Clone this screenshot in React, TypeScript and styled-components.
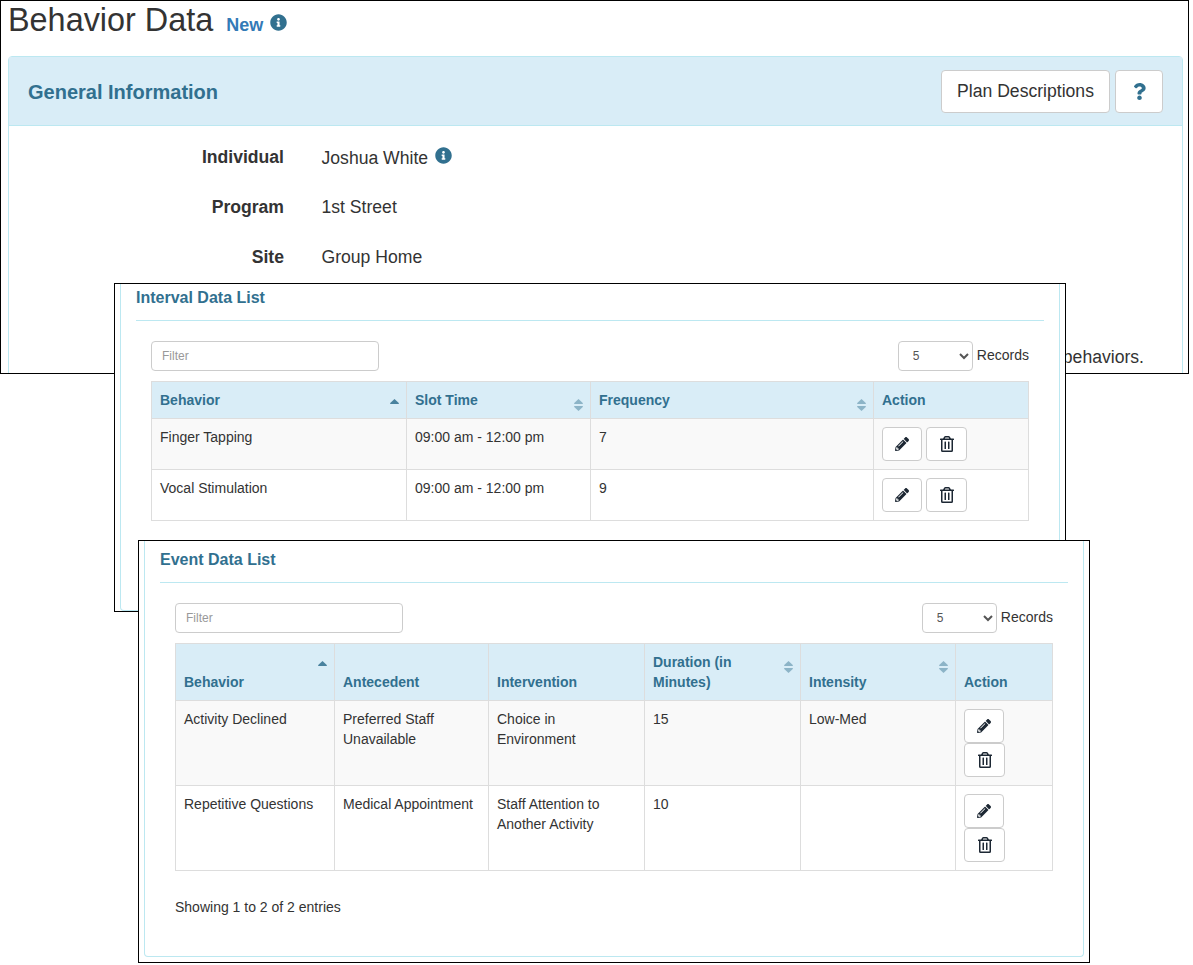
import React from "react";
import styled, { createGlobalStyle } from "styled-components";
import { FaInfoCircle, FaPencilAlt, FaQuestion, FaRegTrashAlt } from "react-icons/fa";

const Global = createGlobalStyle`
  html, body { margin: 0; padding: 0; background: #fff; overflow: hidden; }
  body { font-family: "Liberation Sans", Arial, sans-serif; color: #333; font-size: 14px; line-height: 20px; }
  * { box-sizing: border-box; }
`;

const Desktop = styled.div`
  position: relative;
  width: 1193px;
  height: 965px;
`;

const Window = styled.section<{ $x: number; $y: number; $w: number; $h: number }>`
  position: absolute;
  left: ${(p) => p.$x}px;
  top: ${(p) => p.$y}px;
  width: ${(p) => p.$w}px;
  height: ${(p) => p.$h}px;
  background: #fff;
  border: 1px solid #000;
  overflow: hidden;
`;

const PageHead = styled.header`
  display: flex;
  align-items: baseline;
  height: 55px;
  padding: 0 0 0 7px;
`;

const PageTitle = styled.h1`
  margin: 0;
  font-size: 32.4px;
  font-weight: 400;
  line-height: 38px;
  color: #333;
`;

const NewTag = styled.span`
  margin-left: 13px;
  font-size: 18px;
  font-weight: 700;
  color: #337ab7;
`;

const InfoIcon = styled(FaInfoCircle)`
  color: #31708f;
  font-size: 17px;
  margin-left: 7px;
`;

const TopPanel = styled.div`
  margin: 0 5px 0 7px;
  border: 1px solid #bce8f1;
  border-radius: 4px;
`;

const TopPanelHead = styled.div`
  display: flex;
  align-items: center;
  justify-content: space-between;
  height: 69px;
  padding: 1px 19px 0;
  background: #d9edf7;
  border-bottom: 1px solid #bce8f1;
`;

const TopPanelTitle = styled.h2`
  margin: 0;
  font-size: 20px;
  font-weight: 700;
  color: #31708f;
`;

const HeadActions = styled.div`
  display: flex;
  gap: 5px;
`;

const HeadButton = styled.button<{ $w: number }>`
  width: ${(p) => p.$w}px;
  height: 43px;
  padding: 0;
  display: flex;
  align-items: center;
  justify-content: center;
  background: #fff;
  border: 1px solid #ccc;
  border-radius: 4px;
  font-family: inherit;
  font-size: 17.6px;
  color: #333;
`;

const HelpIcon = styled(FaQuestion)`
  color: #31708f;
  font-size: 17px;
`;

const InfoBody = styled.div`
  padding: 6px 0 60px;
`;

const InfoRow = styled.div`
  display: grid;
  grid-template-columns: 275px 1fr;
  column-gap: 37.5px;
  height: 50px;
  align-items: center;
  font-size: 17.6px;
`;

const InfoLabel = styled.div`
  text-align: right;
  font-weight: 700;
`;

const InfoValue = styled.div`
  display: flex;
  align-items: baseline;
`;

const Note = styled.p`
  margin: 65px 38px 0 0;
  text-align: right;
  font-size: 17.6px;
  line-height: 20px;
`;

const ListPanel = styled.div`
  margin: 0 5px;
  height: 100%;
  padding: 0 15px;
  border: 1px solid #bce8f1;
  border-top: 0;
  border-radius: 0 0 4px 4px;
`;

const ShortPanel = styled(ListPanel)`
  height: 416px;
`;

const ListTitle = styled.h3<{ $pad: number }>`
  margin: 0 0 20px;
  padding: ${(p) => p.$pad}px 0 9px;
  font-size: 16px;
  font-weight: 700;
  line-height: 26px;
  color: #31708f;
  border-bottom: 1px solid #bce8f1;
`;

const ListBody = styled.div`
  padding: 0 15px;
`;

const Toolbar = styled.div`
  display: flex;
  align-items: center;
  justify-content: space-between;
  height: 30px;
  margin-bottom: 10px;
`;

const FilterInput = styled.input`
  width: 228px;
  height: 30px;
  padding: 0 10px;
  border: 1px solid #ccc;
  border-radius: 4px;
  font-family: inherit;
  font-size: 12px;
  color: #555;
  &::placeholder { color: #999; opacity: 1; }
`;

const Records = styled.label`
  display: flex;
  align-items: center;
  gap: 4px;
  font-size: 14px;
  line-height: 20px;
  padding-bottom: 2px;
`;

const PageSize = styled.select`
  width: 75px;
  height: 30px;
  padding: 0 10px;
  margin-top: 2px;
  background: #fff;
  border: 1px solid #ccc;
  border-radius: 4px;
  font-family: inherit;
  font-size: 12px;
  color: #555;
`;

const Table = styled.table`
  width: 877px;
  table-layout: fixed;
  border-collapse: collapse;
  font-size: 14px;
`;

const HeadCell = styled.th<{ $w: number }>`
  position: relative;
  width: ${(p) => p.$w}px;
  padding: 8px;
  text-align: left;
  vertical-align: bottom;
  font-weight: 700;
  line-height: 20px;
  color: #31708f;
  background: #d9edf7;
  border: 1px solid #ddd;
`;

const SortMark = styled.svg<{ $on: boolean }>`
  position: absolute;
  top: 17px;
  right: 7px;
  width: 9px;
  height: 12px;
  fill: #31708f;
  opacity: ${(p) => (p.$on ? 0.85 : 0.45)};
`;

const Row = styled.tr<{ $h: number; $odd: boolean }>`
  height: ${(p) => p.$h}px;
  background: ${(p) => (p.$odd ? "#f9f9f9" : "#fff")};
`;

const Cell = styled.td`
  padding: 8px;
  vertical-align: top;
  line-height: 20px;
  border: 1px solid #ddd;
`;

const ActionGroup = styled.div<{ $stacked: boolean }>`
  display: flex;
  flex-direction: ${(p) => (p.$stacked ? "column" : "row")};
  align-items: flex-start;
  gap: ${(p) => (p.$stacked ? 0 : 4)}px;
`;

const IconButton = styled.button<{ $w: number }>`
  width: ${(p) => p.$w}px;
  height: 34px;
  padding: 0;
  display: flex;
  align-items: center;
  justify-content: center;
  background: #fff;
  border: 1px solid #ccc;
  border-radius: 4px;
  color: #1c2733;
  font-size: 14px;
`;

const Footer = styled.div`
  margin-top: 26px;
  font-size: 14px;
  line-height: 20px;
`;

type Col = { label: React.ReactNode; w: number; sort?: "up" | "both" };

const SortIcon = ({ kind }: { kind: "up" | "both" }) => (
  <SortMark $on={kind === "up"} viewBox="0 0 9 12" aria-hidden>
    <path d="M4.5 0 L9 4.2 Q9 5 8.2 5 L0.8 5 Q0 5 0 4.2 Z" />
    {kind === "both" && <path d="M4.5 12 L9 7.8 Q9 7 8.2 7 L0.8 7 Q0 7 0 7.8 Z" />}
  </SortMark>
);

const Actions = ({ stacked }: { stacked: boolean }) => (
  <ActionGroup $stacked={stacked}>
    <IconButton $w={40} aria-label="Edit"><FaPencilAlt /></IconButton>
    <IconButton $w={41} aria-label="Delete"><FaRegTrashAlt size={16} /></IconButton>
  </ActionGroup>
);

const ListControls = () => (
  <Toolbar>
    <FilterInput placeholder="Filter" />
    <Records>
      <PageSize defaultValue="5">
        <option value="5">5</option>
        <option value="10">10</option>
      </PageSize>
      Records
    </Records>
  </Toolbar>
);

const DataTable = ({ cols, rows, rowH, stacked }: { cols: Col[]; rows: string[][]; rowH: number; stacked: boolean }) => (
  <Table>
    <thead>
      <tr>
        {cols.map((c, i) => (
          <HeadCell key={i} $w={c.w}>
            {c.label}
            {c.sort && <SortIcon kind={c.sort} />}
          </HeadCell>
        ))}
      </tr>
    </thead>
    <tbody>
      {rows.map((r, i) => (
        <Row key={i} $h={rowH} $odd={i % 2 === 0}>
          {r.map((v, j) => <Cell key={j}>{v}</Cell>)}
          <Cell><Actions stacked={stacked} /></Cell>
        </Row>
      ))}
    </tbody>
  </Table>
);

const intervalCols: Col[] = [
  { label: "Behavior", w: 255, sort: "up" },
  { label: "Slot Time", w: 184, sort: "both" },
  { label: "Frequency", w: 283, sort: "both" },
  { label: "Action", w: 155 },
];

const intervalRows = [
  ["Finger Tapping", "09:00 am - 12:00 pm", "7"],
  ["Vocal Stimulation", "09:00 am - 12:00 pm", "9"],
];

const eventCols: Col[] = [
  { label: "Behavior", w: 159, sort: "up" },
  { label: "Antecedent", w: 154 },
  { label: "Intervention", w: 156 },
  { label: <>Duration (in<br />Minutes)</>, w: 156, sort: "both" },
  { label: "Intensity", w: 155, sort: "both" },
  { label: "Action", w: 97 },
];

const eventRows = [
  ["Activity Declined", "Preferred Staff Unavailable", "Choice in Environment", "15", "Low-Med"],
  ["Repetitive Questions", "Medical Appointment", "Staff Attention to Another Activity", "10", ""],
];

export default function App() {
  return (
    <Desktop>
      <Global />
      <Window $x={0} $y={0} $w={1189} $h={374}>
        <PageHead>
          <PageTitle>Behavior Data</PageTitle>
          <NewTag>New</NewTag>
          <InfoIcon />
        </PageHead>
        <TopPanel>
          <TopPanelHead>
            <TopPanelTitle>General Information</TopPanelTitle>
            <HeadActions>
              <HeadButton $w={169}>Plan Descriptions</HeadButton>
              <HeadButton $w={48} aria-label="Help"><HelpIcon /></HeadButton>
            </HeadActions>
          </TopPanelHead>
          <InfoBody>
            <InfoRow>
              <InfoLabel>Individual</InfoLabel>
              <InfoValue>Joshua White<InfoIcon /></InfoValue>
            </InfoRow>
            <InfoRow>
              <InfoLabel>Program</InfoLabel>
              <InfoValue>1st Street</InfoValue>
            </InfoRow>
            <InfoRow>
              <InfoLabel>Site</InfoLabel>
              <InfoValue>Group Home</InfoValue>
            </InfoRow>
            <Note>behaviors.</Note>
          </InfoBody>
        </TopPanel>
      </Window>

      <Window $x={114} $y={283} $w={952} $h={329}>
        <ListPanel>
          <ListTitle $pad={1}>Interval Data List</ListTitle>
          <ListBody>
            <ListControls />
            <DataTable cols={intervalCols} rows={intervalRows} rowH={51} stacked={false} />
          </ListBody>
        </ListPanel>
      </Window>

      <Window $x={138} $y={540} $w={952} $h={423}>
        <ShortPanel>
          <ListTitle $pad={6}>Event Data List</ListTitle>
          <ListBody>
            <ListControls />
            <DataTable cols={eventCols} rows={eventRows} rowH={85} stacked />
            <Footer>Showing 1 to 2 of 2 entries</Footer>
          </ListBody>
        </ShortPanel>
      </Window>
    </Desktop>
  );
}
